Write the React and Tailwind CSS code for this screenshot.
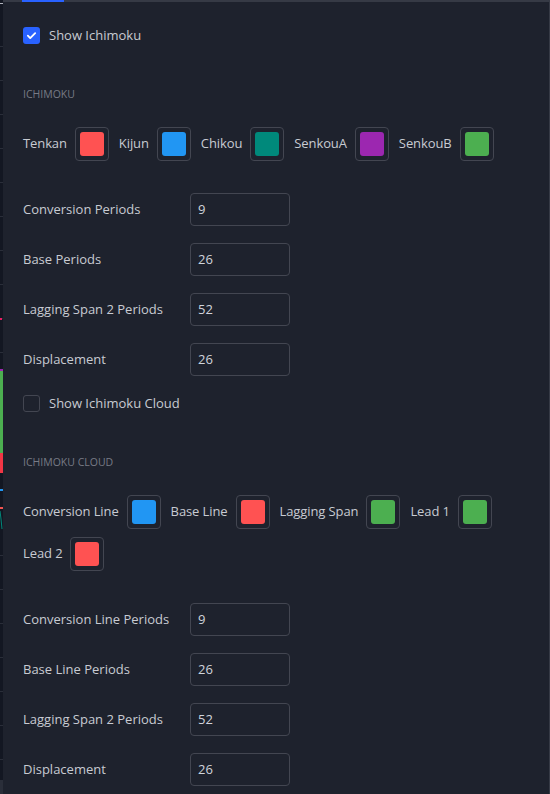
import React from 'react';

const font = { fontFamily: '"Open Sans", "Liberation Sans", sans-serif' };

const Checkbox = ({ checked, label }) => (
  <div className="flex items-center h-[18px]">
    {checked ? (
      <span className="w-[17px] h-[17px] rounded-[3px] bg-[#2962ff] flex items-center justify-center">
        <svg width="11" height="11" viewBox="0 0 12 12" fill="none">
          <path d="M2 6.2l2.6 2.6L10 3.4" stroke="white" strokeWidth="2" strokeLinecap="round" strokeLinejoin="round" />
        </svg>
      </span>
    ) : (
      <span className="w-[17px] h-[17px] rounded-[3px] border border-[#434651]" />
    )}
    <span className="ml-[9px] text-[13px] leading-[20px] text-[#c8cbd2]">{label}</span>
  </div>
);

const Header = ({ children, className }) => (
  <div className={`text-[10.5px] leading-[14px] text-[#787b86] ${className}`}>{children}</div>
);

const Swatch = ({ label, color }) => (
  <div className="flex items-center gap-[8px]">
    <span className="text-[13px] tracking-[-0.1px] text-[#c8cbd2]">{label}</span>
    <span className="w-[34px] h-[34px] rounded-[4px] border border-[#434651] p-[4px]">
      <span className="block w-full h-full rounded-[3px]" style={{ background: color }} />
    </span>
  </div>
);

const NumberRow = ({ label, value }) => (
  <div className="flex items-center">
    <span className="w-[167px] text-[13px] pt-px text-[#c8cbd2]">{label}</span>
    <div className="w-[100px] h-[33px] rounded-[4px] border border-[#434651] flex items-center px-[7px] pt-px text-[13px] text-[#d1d4dc]">
      {value}
    </div>
  </div>
);

const grid = [46, 80, 114, 148, 182, 216, 250, 284, 318, 352, 420, 555, 589, 623, 657, 691, 725, 759];

export default function App() {
  return (
    <div className="flex w-[550px] h-[794px] overflow-hidden bg-[#131722]" style={font}>
      {/* chart edge behind the panel */}
      <div className="relative w-[3px] h-full bg-[#131722]">
        {grid.map((y) => (
          <span key={y} className="absolute left-0 w-[3px] h-px bg-[#2a2e39]" style={{ top: y }} />
        ))}
        <span className="absolute left-0 top-[3px] w-[3px] h-px bg-[#b2b5be]" />
        <span className="absolute left-0 top-[318px] w-[2px] h-[2px] bg-[#e91e63]" />
        <span className="absolute left-0 top-[369px] w-[3px] h-[2px] bg-[#9c27b0]" />
        <span className="absolute left-0 top-[371px] w-[3px] h-[82px] bg-[#4caf50]" />
        <span className="absolute left-0 top-[453px] w-[3px] h-[20px] bg-[#f23645]" />
        <span className="absolute left-0 top-[489px] w-[3px] h-[2px] bg-[#2196f3]" />
        <span className="absolute left-0 top-[507px] w-[3px] h-[2px] bg-[#ef5350]" />
        <svg className="absolute left-0 top-[509px]" width="3" height="22" viewBox="0 0 3 22">
          <path d="M0 2 L1 10 L2 20" stroke="#00897b" strokeWidth="1" fill="none" />
        </svg>
        <span className="absolute left-0 top-[780px] w-[3px] h-[14px] bg-[#2a2e39]" />
      </div>

      {/* settings panel */}
      <div className="flex-1 h-full bg-[#1e222d] border-r border-[#363a45] flex flex-col">
        <div className="h-[2px] bg-[#363a45] flex">
          <span className="ml-[19px] w-[42px] h-[2px] bg-[#2962ff]" />
        </div>

        <div className="pl-[20px] pr-[16px] pt-[24px] flex flex-col">
          <Checkbox checked label="Show Ichimoku" />

          <Header className="mt-[43px]">ICHIMOKU</Header>

          <div className="mt-[26px] flex flex-wrap gap-x-[10px] gap-y-[8px]">
            <Swatch label="Tenkan" color="#ff5252" />
            <Swatch label="Kijun" color="#2196f3" />
            <Swatch label="Chikou" color="#00897b" />
            <Swatch label="SenkouA" color="#9c27b0" />
            <Swatch label="SenkouB" color="#4caf50" />
          </div>

          <div className="mt-[32px] flex flex-col gap-[17px]">
            <NumberRow label="Conversion Periods" value="9" />
            <NumberRow label="Base Periods" value="26" />
            <NumberRow label="Lagging Span 2 Periods" value="52" />
            <NumberRow label="Displacement" value="26" />
          </div>

          <div className="mt-[18px]">
            <Checkbox label="Show Ichimoku Cloud" />
          </div>

          <Header className="mt-[43px]">ICHIMOKU CLOUD</Header>

          <div className="mt-[26px] flex flex-wrap gap-x-[10px] gap-y-[8px]">
            <Swatch label="Conversion Line" color="#2196f3" />
            <Swatch label="Base Line" color="#ff5252" />
            <Swatch label="Lagging Span" color="#4caf50" />
            <Swatch label="Lead 1" color="#4caf50" />
            <Swatch label="Lead 2" color="#ff5252" />
          </div>

          <div className="mt-[32px] flex flex-col gap-[17px]">
            <NumberRow label="Conversion Line Periods" value="9" />
            <NumberRow label="Base Line Periods" value="26" />
            <NumberRow label="Lagging Span 2 Periods" value="52" />
            <NumberRow label="Displacement" value="26" />
          </div>
        </div>
      </div>
    </div>
  );
}
